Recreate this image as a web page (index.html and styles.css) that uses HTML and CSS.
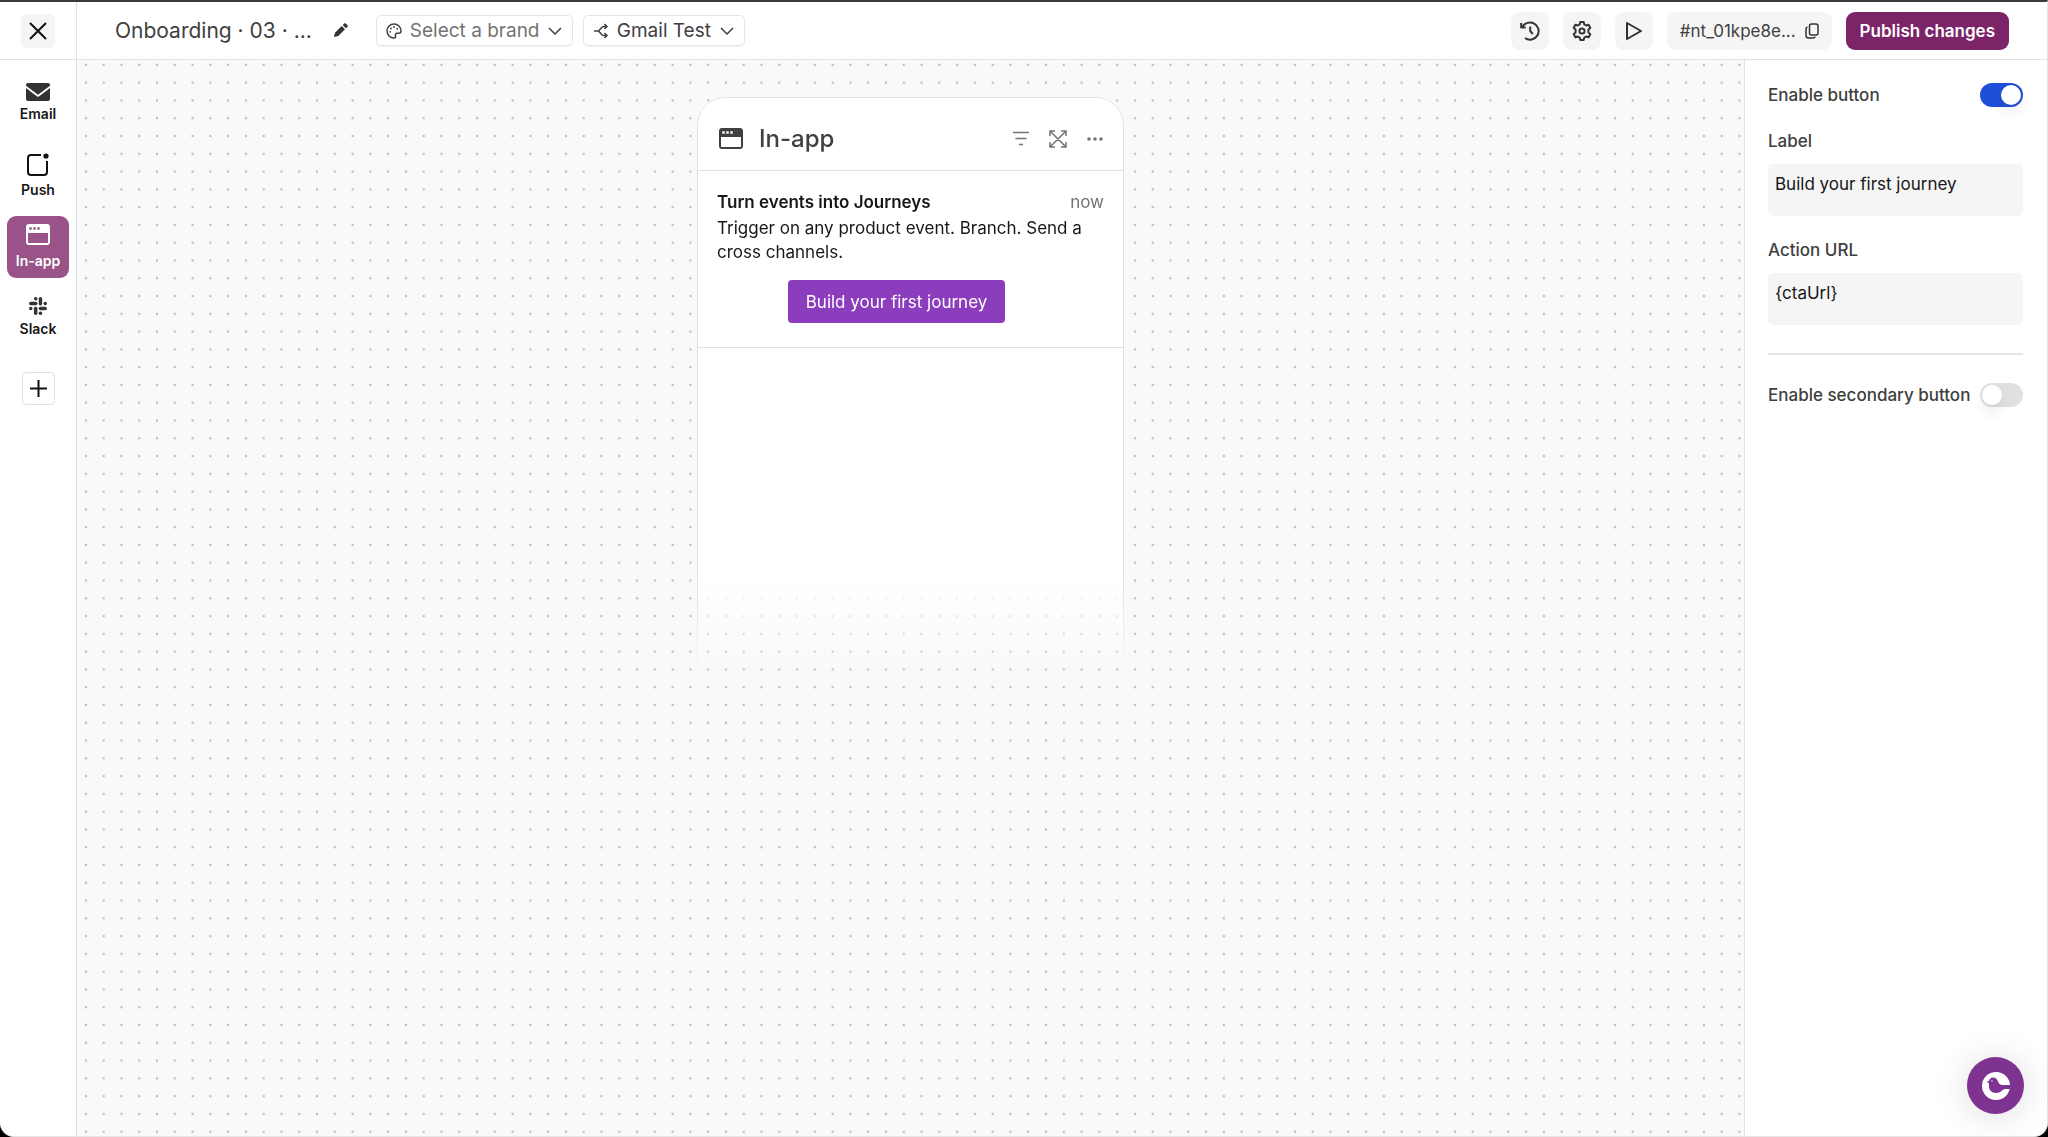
FILE: index.html
```html
<!DOCTYPE html>
<html lang="en">
<head>
  <meta charset="UTF-8" />
  <meta name="viewport" content="width=device-width, initial-scale=1.0"/>
  <title>Onboarding - In-app</title>
  <link rel="stylesheet" href="styles.css">
</head>
<body>
  <div class="app">
    <header class="topbar">
      <div class="topbar-close">
        <button class="close-btn" aria-label="Close">
          <svg width="18" height="18" viewBox="0 0 18 18"><path d="M1 1l16 16M17 1L1 17"/></svg>
        </button>
      </div>
      <h1 class="doc-title">Onboarding · 03 · ...</h1>
      <button class="edit-btn" aria-label="Rename">
        <svg width="15" height="15" viewBox="0 0 16 16"><path d="M1 15l1.100-4.600L9.300 3.200l3.500 3.500-7.200 7.200zM10.300 2.200l1.500-1.500c.6-.6 1.400-.6 2 0l1.500 1.500c.6.600.6 1.400 0 2l-1.500 1.500z"/></svg>
      </button>
      <div class="selectors">
        <div class="selector">
          <svg class="icon" width="16" height="16" viewBox="0 0 16 16"><path d="M8 1a7 7 0 0 0 0 14c1.300 0 1.700-.8 1.500-1.700-.4-1.600-.1-3 1.700-3h1.600c1.400 0 2.200-.9 2.200-2.300C15 4 12 1 8 1z"/><g class="dots"><circle cx="4.200" cy="8.800" r=".9"/><circle cx="5" cy="5.500" r=".9"/><circle cx="8" cy="4" r=".9"/><circle cx="11.200" cy="5.700" r=".9"/></g></svg>
          <select class="muted" aria-label="Brand"><option>Select a brand</option></select>
          <svg class="chevron" width="14" height="8" viewBox="0 0 14 8"><path d="M1 1l6 6 6-6"/></svg>
        </div>
        <div class="selector">
          <svg class="icon" width="16" height="16" viewBox="0 0 16 16"><path d="M1 8h4.500L9 4.200c.5-.5 1-.7 1.700-.7H14M5.500 8L9 11.800c.5.500 1 .7 1.700.7H14M11.500 1L14 3.500 11.500 6M11.500 10l2.500 2.500-2.500 2.500"/></svg>
          <select aria-label="Routing"><option>Gmail Test</option></select>
          <svg class="chevron" width="14" height="8" viewBox="0 0 14 8"><path d="M1 1l6 6 6-6"/></svg>
        </div>
      </div>
      <div class="actions">
        <button class="icon-btn" aria-label="History">
          <svg width="20" height="20" viewBox="0 0 20 20"><path d="M2.300 6.300A8.600 8.600 0 1 1 5 17M1.200 2v4.500h4.500M10.200 5.500V10l2.600 3"/></svg>
        </button>
        <button class="icon-btn" aria-label="Settings">
          <svg width="20" height="20" viewBox="0 0 20 20"><circle cx="10" cy="10" r="2.600"/><path d="M8.300 1h3.400l.6 2.500 1.800 1 2.500-.7 1.700 2.900-1.900 1.900v2.800l1.900 1.900-1.700 2.900-2.500-.7-1.800 1-.6 2.500H8.300l-.6-2.500-1.800-1-2.500.7-1.700-2.900 1.900-1.900V8.600L1.700 6.700l1.700-2.900 2.500.7 1.800-1z"/></svg>
        </button>
        <button class="icon-btn" aria-label="Preview">
          <svg width="20" height="20" viewBox="0 0 20 20"><path d="M3 2l14 8-14 8z"/></svg>
        </button>
        <button class="id-btn">
          #nt_01kpe8e...
          <svg width="14" height="16" viewBox="0 0 14 16"><rect x="4.500" y="1" width="8.500" height="11" rx="2"/><path d="M2.500 4C1.500 4.200 1 4.800 1 6v6.500C1 14.200 1.800 15 3.500 15H8c1.200 0 1.900-.4 2.200-1.300"/></svg>
        </button>
        <button class="publish-btn">Publish changes</button>
      </div>
    </header>

    <div class="workspace">
      <nav class="sidebar">
        <button class="channel channel-email">
          <svg width="24" height="18" viewBox="0 0 24 18"><path fill="currentColor" d="M2 0h20c1.200 0 2 .8 2 2v.8l-12 9-12-9V2C0 .8.800 0 2 0zM0 5l11.200 8.500c.5.400 1.100.4 1.600 0L24 5v11c0 1.200-.8 2-2 2H2c-1.200 0-2-.8-2-2z"/></svg>
          <span>Email</span>
        </button>
        <button class="channel channel-push">
          <svg width="22" height="23" viewBox="0 0 22 23"><path fill="none" stroke="currentColor" stroke-width="2" d="M14 2H4c-2 0-3 1-3 3v14c0 2 1 3 3 3h13c2 0 3-1 3-3V8"/><circle cx="19" cy="3" r="2.600" fill="currentColor"/></svg>
          <span>Push</span>
        </button>
        <button class="channel channel-active">
          <svg width="24" height="21" viewBox="0 0 24 21"><path fill="currentColor" fill-rule="evenodd" d="M3 0h18c1.800 0 3 1.200 3 3v15c0 1.800-1.200 3-3 3H3c-1.800 0-3-1.200-3-3V3c0-1.800 1.200-3 3-3zM2 9v9c0 .7.300 1 1 1h18c.7 0 1-.3 1-1V9zM3.300 3.300v2.400h2.400V3.300zM7.300 3.300v2.400h2.400V3.300zM11.300 3.300v2.400h2.400V3.300z"/></svg>
          <span>In-app</span>
        </button>
        <button class="channel channel-slack">
          <svg width="18" height="18" viewBox="0 0 18 18" fill="currentColor"><rect x="5" y="0" width="3.500" height="3.500" rx="1.700"/><rect x="0" y="4.800" width="8.500" height="3.500" rx="1.700"/><rect x="9.700" y="0" width="3.500" height="8.500" rx="1.700"/><rect x="14.500" y="4.800" width="3.500" height="3.500" rx="1.700"/><rect x="9.700" y="9.700" width="8.300" height="3.500" rx="1.700"/><rect x="9.700" y="14.500" width="3.500" height="3.500" rx="1.700"/><rect x="4.900" y="9.700" width="3.500" height="8.300" rx="1.700"/><rect x="0" y="9.700" width="3.500" height="3.500" rx="1.700"/></svg>
          <span>Slack</span>
        </button>
        <button class="add-btn" aria-label="Add channel">
          <svg width="17" height="17" viewBox="0 0 17 17"><path d="M8.500 0v17M0 8.500h17"/></svg>
        </button>
      </nav>

      <main class="canvas">
        <svg class="canvas-dots" width="100%" height="100%" aria-hidden="true">
          <defs>
            <pattern id="dots" y="-4" width="17.780" height="17.780" patternUnits="userSpaceOnUse">
              <circle cx="8.900" cy="8.900" r="1.200"/>
            </pattern>
          </defs>
          <rect width="100%" height="100%" fill="url(#dots)"/>
        </svg>

        <section class="card">
          <div class="card-header">
            <svg width="24" height="21" viewBox="0 0 24 21"><path fill="currentColor" fill-rule="evenodd" d="M3 0h18c1.800 0 3 1.200 3 3v15c0 1.800-1.200 3-3 3H3c-1.800 0-3-1.200-3-3V3c0-1.800 1.200-3 3-3zM2 9v9c0 .7.300 1 1 1h18c.7 0 1-.3 1-1V9zM3.300 3.300v2.400h2.400V3.300zM7.300 3.300v2.400h2.400V3.300zM11.300 3.300v2.400h2.400V3.300z"/></svg>
            <h2>In-app</h2>
            <div class="card-tools">
              <svg width="18" height="18" viewBox="0 0 18 18"><path d="M1 2.500h16M3.500 8.500h11M7 14.500h4"/></svg>
              <svg width="18" height="18" viewBox="0 0 18 18"><path d="M1 6V1h5M12 1h5v5M17 12v5h-5M6 17H1v-5M1.500 1.500l15 15M16.500 1.500l-15 15"/></svg>
              <svg width="18" height="18" viewBox="0 0 18 18"><g class="dots"><circle cx="3" cy="9" r="1.800"/><circle cx="9" cy="9" r="1.800"/><circle cx="15" cy="9" r="1.800"/></g></svg>
            </div>
          </div>
          <div class="message">
            <div class="message-top">
              <h3>Turn events into Journeys</h3>
              <span class="message-time">now</span>
            </div>
            <div class="message-body">
              <p>Trigger on any product event. Branch. Send a<br>cross channels.</p>
              <button class="cta-btn">Build your first journey</button>
            </div>
          </div>
        </section>
      </main>

      <aside class="panel">
        <div class="toggle-row">
          <label for="enable-button">Enable button</label>
          <input class="toggle" type="checkbox" id="enable-button" checked>
        </div>
        <div class="field">
          <label for="button-label">Label</label>
          <textarea id="button-label" rows="1">Build your first journey</textarea>
        </div>
        <div class="field">
          <label for="action-url">Action URL</label>
          <textarea id="action-url" rows="1" spellcheck="false">{ctaUrl}</textarea>
        </div>
        <hr>
        <div class="toggle-row">
          <label for="enable-secondary">Enable secondary button</label>
          <input class="toggle" type="checkbox" id="enable-secondary">
        </div>
      </aside>
    </div>

    <button class="help-btn" aria-label="Help">
      <svg width="28" height="28" viewBox="0 0 28 28"><circle cx="14" cy="14" r="14" fill="#fff"/><path fill="#7f3391" d="M5 10l2-1.200C7.500 6.800 9 5.500 11 5.500c3 0 4.200 1.800 5 4 .8 2.200 2.200 3.300 4.500 3.400H29v4h-5.500c-2 0-3 1-4 2.100-1.200 1.200-3 2-5.500 2-4.500 0-7-3-7-6.500V11.500z"/><circle cx="10" cy="9" r=".7" fill="#fff"/></svg>
    </button>
  </div>
</body>
</html>
```

FILE: styles.css
```css
* {
  box-sizing: border-box;
}

body {
  margin: 0;
  background: #000;
  color: #171717;
  font-family: Inter, "Liberation Sans", sans-serif;
  font-size: 17px;
}

h1, h2, h3, p {
  margin: 0;
}

button {
  display: flex;
  align-items: center;
  justify-content: center;
  padding: 0;
  border: none;
  background: none;
  color: inherit;
  font: inherit;
  cursor: pointer;
}

svg {
  display: block;
  flex: none;
}

.dots {
  fill: currentColor;
  stroke: none;
}

.app {
  display: flex;
  flex-direction: column;
  height: 100vh;
  overflow: hidden;
  background: #fff;
  border-top: 2px solid #3a3a3a;
  border-right: 1px solid #e5e5e5;
  border-bottom: 1px solid #e5e5e5;
  border-radius: 0 0 14px 14px;
}

/* top bar */

.topbar {
  display: flex;
  align-items: center;
  height: 58px;
  flex: none;
  padding-right: 38px;
  border-bottom: 1px solid #e2e2e5;
  color: #404040;
}

.topbar-close {
  display: flex;
  align-items: center;
  justify-content: center;
  align-self: stretch;
  width: 77px;
  border-right: 1px solid #e2e2e5;
}

.close-btn {
  width: 34px;
  height: 34px;
  border-radius: 5px;
  background: #f5f5f5;
}

.close-btn svg,
.add-btn svg {
  stroke: #111;
  stroke-width: 2;
}

.doc-title {
  margin-left: 38px;
  font-size: 21px;
  font-weight: 400;
  white-space: nowrap;
}

.edit-btn {
  margin-left: 21px;
  fill: #333;
}

.selectors {
  display: flex;
  gap: 10px;
  margin-left: 28px;
}

.selector {
  display: flex;
  align-items: center;
  gap: 8px;
  height: 31px;
  padding: 0 10px 0 9px;
  border: 1px solid #e5e5e5;
  border-radius: 5px;
  box-shadow: 0 1px 2px rgba(0,0,0,0.05);
}

.selector svg {
  fill: none;
  stroke: #404040;
  stroke-width: 1.5;
}

.selector .dots {
  fill: #404040;
  stroke: none;
}

.selector select {
  appearance: none;
  padding: 0;
  border: none;
  background: none;
  color: #404040;
  font: inherit;
  font-size: 19px;
}

.selector select.muted {
  color: #737373;
}

.actions {
  display: flex;
  gap: 14px;
  margin-left: auto;
}

.icon-btn,
.id-btn {
  height: 38px;
  border-radius: 9px;
  background: #f5f5f5;
}

.icon-btn {
  width: 38px;
}

.icon-btn svg,
.id-btn svg {
  fill: none;
  stroke: #333;
  stroke-width: 2;
  stroke-linejoin: round;
}

.id-btn {
  gap: 9px;
  padding: 0 13px;
}

.id-btn svg {
  stroke-width: 1.5;
}

.publish-btn {
  height: 38px;
  padding: 0 14px;
  border-radius: 9px;
  background: #7b2467;
  color: #fff;
  font-weight: 600;
}

/* left channel list */

.workspace {
  display: flex;
  flex: 1;
  min-height: 0;
}

.sidebar {
  display: flex;
  flex-direction: column;
  align-items: center;
  width: 77px;
  flex: none;
  padding-top: 12px;
  border-right: 1px solid #e2e2e5;
}

.channel {
  flex-direction: column;
  gap: 7px;
  width: 62px;
  height: 62px;
  border-radius: 9px;
  font-size: 14px;
  font-weight: 600;
  line-height: 18px;
}

.channel svg {
  color: #333;
}

.channel-email {
  gap: 4px;
}

.channel-push {
  gap: 5px;
  margin-top: 11px;
}

.channel-push svg {
  color: #111;
}

.channel-active {
  margin-top: 9px;
  background: #995388;
  color: #fff;
}

.channel-active svg {
  color: #fff;
}

.channel-slack {
  gap: 5px;
  margin-top: 8px;
}

.add-btn {
  width: 33px;
  height: 33px;
  margin-top: 24px;
  border: 1px solid #e0e0e0;
  border-radius: 4px;
}

/* canvas */

.canvas {
  position: relative;
  display: flex;
  justify-content: center;
  align-items: flex-start;
  flex: 1;
  min-width: 0;
  padding-top: 37px;
  background: #faf9f8;
}

.canvas-dots {
  position: absolute;
  top: 0;
  left: 0;
  fill: #bcbcbe;
}

.card {
  position: relative;
  width: 427px;
  min-height: 585px;
  background: #fff;
  border: 1px solid #e0e0e0;
  border-radius: 28px;
  mask-image: linear-gradient(#000 81%, transparent);
}

.card-header {
  display: flex;
  align-items: center;
  height: 73px;
  padding: 9px 19px 0 21px;
  border-bottom: 1px solid #e0e0e0;
  color: #404040;
}

.card-header h2 {
  margin-left: 16px;
  font-size: 24px;
  font-weight: 500;
}

.card-tools {
  display: flex;
  gap: 19px;
  margin-left: auto;
}

.card-tools svg {
  fill: none;
  stroke: #737373;
  stroke-width: 1.5;
  color: #737373;
}

.message {
  padding: 19px 19px 24px;
  border-bottom: 1px solid #e0e0e0;
  line-height: 24px;
}

.message-top {
  display: flex;
  justify-content: space-between;
}

.message h3 {
  font-size: 17px;
  font-weight: 600;
}

.message-time {
  color: #737373;
}

.message-body {
  display: flex;
  flex-direction: column;
  align-items: center;
  gap: 16px;
  padding-top: 2px;
  padding-right: 28px;
}

.message-body p {
  align-self: stretch;
  white-space: nowrap;
}

.cta-btn {
  height: 43px;
  padding: 0 18px;
  border-radius: 4px;
  background: #8b3dbd;
  color: #fff;
}

/* right panel */

.panel {
  width: 303px;
  flex: none;
  padding: 23px 24px 0 23px;
  border-left: 1px solid #e2e2e5;
  color: #404040;
}

.toggle-row {
  display: flex;
  align-items: center;
  justify-content: space-between;
  height: 24px;
}

.panel label {
  font-weight: 500;
  line-height: 24px;
  white-space: nowrap;
}

.toggle {
  appearance: none;
  display: flex;
  align-items: center;
  width: 43px;
  height: 24px;
  margin: 0;
  padding: 2px;
  border-radius: 12px;
  background: #e0e0e2;
  cursor: pointer;
}

.toggle::before {
  content: "";
  width: 20px;
  height: 20px;
  border-radius: 50%;
  background: #fff;
  box-shadow: 0 8px 14px rgba(0,0,0,0.08);
}

.toggle:checked {
  justify-content: flex-end;
  background: #1f4fd8;
}

.field {
  display: flex;
  flex-direction: column;
  gap: 11px;
  margin-top: 22px;
}

.field textarea {
  height: 52px;
  padding: 8px 7px;
  border: none;
  border-radius: 5px;
  background: #f5f5f5;
  color: #171717;
  font: inherit;
  line-height: 24px;
  resize: none;
}

.panel hr {
  height: 2px;
  margin: 28px 0;
  border: none;
  background: #e5e5e5;
}

/* floating help button */

.help-btn {
  position: fixed;
  right: 24px;
  bottom: 23px;
  width: 57px;
  height: 57px;
  border-radius: 50%;
  background: #7f3391;
  box-shadow: 0 2px 36px rgba(0,0,0,0.14);
}
```
